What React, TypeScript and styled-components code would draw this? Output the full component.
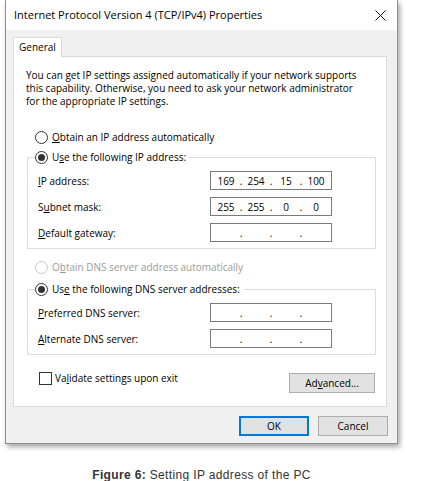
import React from 'react';
import styled, { createGlobalStyle } from 'styled-components';

const UI = '"Open Sans", "Noto Sans", sans-serif';
const FS = '10px';

const Global = createGlobalStyle`
  html, body { margin: 0; padding: 0; background: #ffffff; }
  body { width: 421px; height: 481px; overflow: hidden; font-family: ${UI}; color: #000; }
  * { box-sizing: border-box; }
`;

const Page = styled.div`
  display: flex;
  flex-direction: column;
  align-items: flex-start;
  padding-left: 5px;
`;

const Window = styled.div`
  width: 393px;
  height: 444px;
  border: 1px solid #8f8f8f;
  border-top: none;
  background: #f0f0f0;
  box-shadow: 2px 3px 5px rgba(0, 0, 0, 0.35);
  display: flex;
  flex-direction: column;
`;

const TitleBar = styled.div`
  height: 30px;
  flex: 0 0 30px;
  background: #ffffff;
  display: flex;
  align-items: center;
  justify-content: space-between;
  padding: 0 11px 0 8px;
`;

const Title = styled.span`
  font-size: 11px;
  line-height: 14px;
  white-space: nowrap;
`;

const Client = styled.div`
  display: flex;
  flex-direction: column;
  padding: 7px 10px 0 7px;
`;

const Tab = styled.div`
  width: 49px;
  height: 20px;
  background: #ffffff;
  border: 1px solid #d9d9d9;
  border-bottom: none;
  margin-bottom: -1px;
  position: relative;
  z-index: 1;
  font-size: ${FS};
  line-height: 18px;
  padding-left: 5px;
`;

const Panel = styled.div`
  background: #ffffff;
  border: 1px solid #d9d9d9;
  padding: 12px 10px 13px 12px;
  display: flex;
  flex-direction: column;
`;

const Text = styled.p`
  margin: 0;
  font-size: ${FS};
  line-height: 13px;
  white-space: nowrap;
`;

const RadioRow = styled.label<{ $mt?: number; $disabled?: boolean }>`
  display: flex;
  align-items: center;
  gap: 4px;
  height: 14px;
  margin-top: ${(p) => p.$mt ?? 0}px;
  margin-left: ${(p) => (p.$mt !== undefined ? 9 : 0)}px;
  font-size: ${FS};
  line-height: 14px;
  white-space: nowrap;
  color: ${(p) => (p.$disabled ? '#9a9a9a' : '#000')};
`;

const Circle = styled.span<{ $checked?: boolean; $disabled?: boolean }>`
  width: 13px;
  height: 13px;
  border-radius: 50%;
  border: 1px solid ${(p) => (p.$disabled ? '#c8c8c8' : '#333333')};
  background: #fff;
  display: flex;
  align-items: center;
  justify-content: center;
  flex: 0 0 13px;
  &::after {
    content: '';
    display: ${(p) => (p.$checked ? 'block' : 'none')};
    width: 7px;
    height: 7px;
    border-radius: 50%;
    background: #333333;
  }
`;

const Group = styled.fieldset<{ $mt: number }>`
  margin: ${(p) => p.$mt}px 0 0 1px;
  padding: 7px 10px 6px 10px;
  border: 1px solid #dcdcdc;
  min-width: 0;
  display: flex;
  flex-direction: column;
  gap: 7px;
`;

const Legend = styled.legend`
  padding: 0 3px 0 0;
  margin-left: -3px;
  height: 14px;
`;

const Row = styled.div`
  display: flex;
  align-items: center;
  height: 19px;
`;

const Label = styled.span`
  width: 172px;
  font-size: ${FS};
  white-space: nowrap;
`;

const IpBox = styled.div`
  width: 122px;
  height: 19px;
  border: 1px solid #7a7a7a;
  background: #fff;
  display: grid;
  grid-template-columns: 1fr 4px 1fr 4px 1fr 4px 1fr;
  align-items: center;
  padding: 0 2px;
  font-size: ${FS};
  color: #000;
`;

const Seg = styled.span`
  text-align: center;
`;

const Dot = styled.span`
  text-align: center;
`;

const BottomRow = styled.div`
  display: flex;
  justify-content: space-between;
  align-items: flex-start;
  margin-top: 16px;
  padding-left: 13px;
  padding-right: 1px;
`;

const CheckRow = styled.label`
  display: flex;
  align-items: center;
  gap: 3px;
  height: 14px;
  font-size: ${FS};
  white-space: nowrap;
`;

const Box = styled.span`
  width: 13px;
  height: 13px;
  border: 1px solid #333;
  background: #fff;
  flex: 0 0 13px;
`;

const Button = styled.button<{ $w: number; $default?: boolean }>`
  width: ${(p) => p.$w}px;
  height: 20px;
  margin: 0;
  padding: 0;
  background: #e1e1e1;
  border: ${(p) => (p.$default ? '2px solid #0078d7' : '1px solid #adadad')};
  font-family: ${UI};
  font-size: ${FS};
  color: #000;
  display: flex;
  align-items: center;
  justify-content: center;
`;

const AdvButton = styled(Button)`
  margin-top: 2px;
`;

const Buttons = styled.div`
  display: flex;
  justify-content: flex-end;
  gap: 9px;
  margin-top: 9px;
  margin-right: -1px;
`;

const Caption = styled.div`
  width: 393px;
  margin-top: 24px;
  text-align: center;
  font-family: "Liberation Sans", Arial, sans-serif;
  font-size: 12px;
  line-height: 14px;
  color: #333;
  letter-spacing: 0.35px;
`;

const U = styled.u`
  text-decoration-thickness: 1px;
  text-underline-offset: 1px;
`;

const CloseIcon = () => (
  <svg width="11" height="11" viewBox="0 0 11 11">
    <path d="M0.5 0.5 L10.5 10.5 M10.5 0.5 L0.5 10.5" stroke="#111" strokeWidth="1" fill="none" />
  </svg>
);

const Ip = ({ v }: { v: string[] }) => (
  <IpBox>
    <Seg>{v[0]}</Seg>
    <Dot>.</Dot>
    <Seg>{v[1]}</Seg>
    <Dot>.</Dot>
    <Seg>{v[2]}</Seg>
    <Dot>.</Dot>
    <Seg>{v[3]}</Seg>
  </IpBox>
);

export default function App() {
  const empty = ['', '', '', ''];
  return (
    <>
      <Global />
      <Page>
        <Window>
          <TitleBar>
            <Title>Internet Protocol Version 4 (TCP/IPv4) Properties</Title>
            <CloseIcon />
          </TitleBar>
          <Client>
            <Tab>General</Tab>
            <Panel>
              <Text>
                You can get IP settings assigned automatically if your network supports
                <br />
                this capability. Otherwise, you need to ask your network administrator
                <br />
                for the appropriate IP settings.
              </Text>
              <RadioRow $mt={22}>
                <Circle />
                <span><U>O</U>btain an IP address automatically</span>
              </RadioRow>
              <Group $mt={6}>
                <Legend>
                  <RadioRow>
                    <Circle $checked />
                    <span>U<U>s</U>e the following IP address:</span>
                  </RadioRow>
                </Legend>
                <Row>
                  <Label><U>I</U>P address:</Label>
                  <Ip v={['169', '254', '15', '100']} />
                </Row>
                <Row>
                  <Label>S<U>u</U>bnet mask:</Label>
                  <Ip v={['255', '255', '0', '0']} />
                </Row>
                <Row>
                  <Label><U>D</U>efault gateway:</Label>
                  <Ip v={empty} />
                </Row>
              </Group>
              <RadioRow $mt={11} $disabled>
                <Circle $disabled />
                <span>O<U>b</U>tain DNS server address automatically</span>
              </RadioRow>
              <Group $mt={8}>
                <Legend>
                  <RadioRow>
                    <Circle $checked />
                    <span>Us<U>e</U> the following DNS server addresses:</span>
                  </RadioRow>
                </Legend>
                <Row>
                  <Label><U>P</U>referred DNS server:</Label>
                  <Ip v={empty} />
                </Row>
                <Row>
                  <Label><U>A</U>lternate DNS server:</Label>
                  <Ip v={empty} />
                </Row>
              </Group>
              <BottomRow>
                <CheckRow>
                  <Box />
                  <span>Va<U>l</U>idate settings upon exit</span>
                </CheckRow>
                <AdvButton $w={86}>Ad<U>v</U>anced...</AdvButton>
              </BottomRow>
            </Panel>
            <Buttons>
              <Button $w={70} $default>OK</Button>
              <Button $w={70}>Cancel</Button>
            </Buttons>
          </Client>
        </Window>
        <Caption>
          <b>Figure 6:</b> Setting IP address of the PC
        </Caption>
      </Page>
    </>
  );
}
